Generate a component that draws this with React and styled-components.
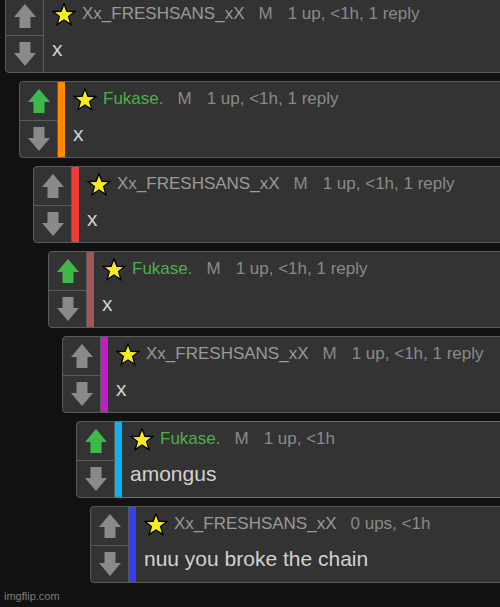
import styled, { createGlobalStyle } from 'styled-components';

const GlobalStyle = createGlobalStyle`
    html, body {
        margin: 0;
        padding: 0;
        background: #111111;
        overflow: hidden;
    }
    body {
        font-family: "Liberation Sans", Arial, sans-serif;
    }
`;

const Page = styled.div`
    position: relative;
    width: 500px;
    height: 607px;
    overflow: hidden;
    background: #111111;
`;

const Thread = styled.div`
    display: flex;
    flex-direction: column;
    gap: 8px;
    margin-top: -4px;
`;

const Card = styled.div`
    display: flex;
    height: 77px;
    box-sizing: border-box;
    margin-left: ${p => Math.round(5 + p.$depth * 14.2)}px;
    margin-right: -12px;
    background: #333333;
    border: 1px solid #5a5a5a;
    border-radius: 4px;
`;

const VoteCol = styled.div`
    display: flex;
    flex-direction: column;
    width: 37px;
    flex-shrink: 0;
    border-right: 1px solid #5a5a5a;
`;

const VoteBtn = styled.div`
    display: flex;
    align-items: center;
    justify-content: center;
    height: ${p => (p.$up ? '38px' : 'auto')};
    flex: ${p => (p.$up ? '0 0 auto' : '1')};
    border-bottom: ${p => (p.$up ? '1px solid #5a5a5a' : 'none')};
`;

const Main = styled.div`
    display: flex;
    flex: 1;
    min-width: 0;
    margin: ${p => (p.$active ? '-1px -1px -1px 0' : '0')};
    border: ${p => (p.$active ? '1px solid #2a84a3' : 'none')};
    border-left: none;
    background: #333333;
`;

const Bar = styled.div`
    width: 7px;
    flex-shrink: 0;
    background: ${p => p.$color};
`;

const Content = styled.div`
    flex: 1;
    padding: 7px 0 0 8px;
`;

const Header = styled.div`
    display: flex;
    align-items: center;
    height: 20px;
    font-size: 17px;
    line-height: 20px;
    color: #8a8a8a;
    white-space: nowrap;
`;

const Name = styled.span`
    margin-left: 6px;
    margin-right: 14px;
    color: ${p => (p.$green ? '#4cb04c' : '#9a9a9a')};
`;

const Mod = styled.span`
    margin-right: 15px;
`;

const Body = styled.div`
    margin-top: 13px;
    font-size: 21px;
    line-height: 24px;
    color: #d2d2d2;
    white-space: nowrap;
`;

const Watermark = styled.div`
    position: absolute;
    left: 4px;
    bottom: 4px;
    font-size: 11px;
    line-height: 13px;
    color: #7c7c7c;
`;

const Arrow = ({ down, color }) => (
    <svg width="22" height="24" viewBox="0 0 22 24" style={down ? { transform: 'rotate(180deg)' } : undefined}>
        <polygon points="11,0 22,13 16.5,13 16.5,24 5.5,24 5.5,13 0,13" fill={color} />
    </svg>
);

const Star = () => (
    <svg width="24" height="23" viewBox="0 0 24 23">
        <polygon
            points="12,0.8 14.9,8.3 23,8.5 16.6,13.6 18.9,21.6 12,17 5.1,21.6 7.4,13.6 1,8.5 9.1,8.3"
            fill="#f7ec1c"
            stroke="#000"
            strokeWidth="1.3"
            strokeLinejoin="miter"
        />
    </svg>
);

const comments = [
    { name: 'Xx_FRESHSANS_xX', meta: '1 up, <1h, 1 reply', body: 'x', bar: null, upvoted: false },
    { name: 'Fukase.', green: true, meta: '1 up, <1h, 1 reply', body: 'x', bar: '#ff8a00', upvoted: true },
    { name: 'Xx_FRESHSANS_xX', meta: '1 up, <1h, 1 reply', body: 'x', bar: '#f23c3c', upvoted: false },
    { name: 'Fukase.', green: true, meta: '1 up, <1h, 1 reply', body: 'x', bar: '#a05858', upvoted: true },
    { name: 'Xx_FRESHSANS_xX', meta: '1 up, <1h, 1 reply', body: 'x', bar: '#c61ec6', upvoted: false },
    { name: 'Fukase.', green: true, meta: '1 up, <1h', body: 'amongus', bar: '#0fb2ea', upvoted: true, active: true },
    { name: 'Xx_FRESHSANS_xX', meta: '0 ups, <1h', body: 'nuu you broke the chain', bar: '#3340f0', upvoted: false, noMod: true },
];

const App = () => {
    return (
        <Page>
            <GlobalStyle />
            <Thread>
                {comments.map((c, i) => (
                    <Card key={i} $depth={i}>
                        <VoteCol>
                            <VoteBtn $up>
                                <Arrow color={c.upvoted ? '#3fb84a' : '#8a8a8a'} />
                            </VoteBtn>
                            <VoteBtn>
                                <Arrow down color="#8a8a8a" />
                            </VoteBtn>
                        </VoteCol>
                        <Main $active={c.active}>
                            {c.bar && <Bar $color={c.bar} />}
                            <Content>
                                <Header>
                                    <Star />
                                    <Name $green={c.green}>{c.name}</Name>
                                    {!c.noMod && <Mod>M</Mod>}
                                    <span>{c.meta}</span>
                                </Header>
                                <Body>{c.body}</Body>
                            </Content>
                        </Main>
                    </Card>
                ))}
            </Thread>
            <Watermark>imgflip.com</Watermark>
        </Page>
    );
};

export default App;
